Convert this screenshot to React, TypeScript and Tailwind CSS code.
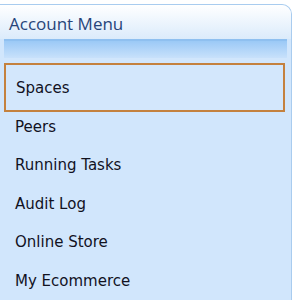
export default function App() {
  const items = ["Peers", "Running Tasks", "Audit Log", "Online Store", "My Ecommerce"];
  const itemFont = { fontFamily: '"DejaVu Sans", Verdana, sans-serif' };
  return (
    <div className="w-[292px] h-[300px] bg-white overflow-hidden">
      <div className="mt-[4px] h-[296px] border-t border-r border-[#a9ccef] rounded-tr-[10px] bg-[#d1e6fc] flex flex-col overflow-hidden">
        <div className="h-[34px] shrink-0 bg-gradient-to-b from-white to-[#dbebfb] pl-[9px] pt-[8px]">
          <span
            className="block text-[17px] leading-[22px] text-[#27457a]"
            style={{ fontFamily: '"Open Sans", "Noto Sans", sans-serif' }}
          >
            Account Menu
          </span>
        </div>
        <div className="h-[19px] shrink-0 ml-[4px] mr-[4px] border-t-2 border-[#8fc0f0] bg-gradient-to-b from-[#9bc9f6] to-[#c8e1fb]" />
        <div className="flex flex-col pt-[5px] pl-[4px] pr-[6px]" style={itemFont}>
          <div className="h-[49px] shrink-0 border-2 border-[#c4813e] bg-[#d3e7fc] pl-[10px] pt-[13.5px]">
            <span className="block text-[15px] leading-[18px] text-[#12121f]">Spaces</span>
          </div>
          {items.map((t) => (
            <div key={t} className="h-[38.6px] shrink-0 pl-[11px] pt-[5.5px]">
              <span className="block text-[15px] leading-[18px] text-[#12121f]">{t}</span>
            </div>
          ))}
        </div>
      </div>
    </div>
  );
}
